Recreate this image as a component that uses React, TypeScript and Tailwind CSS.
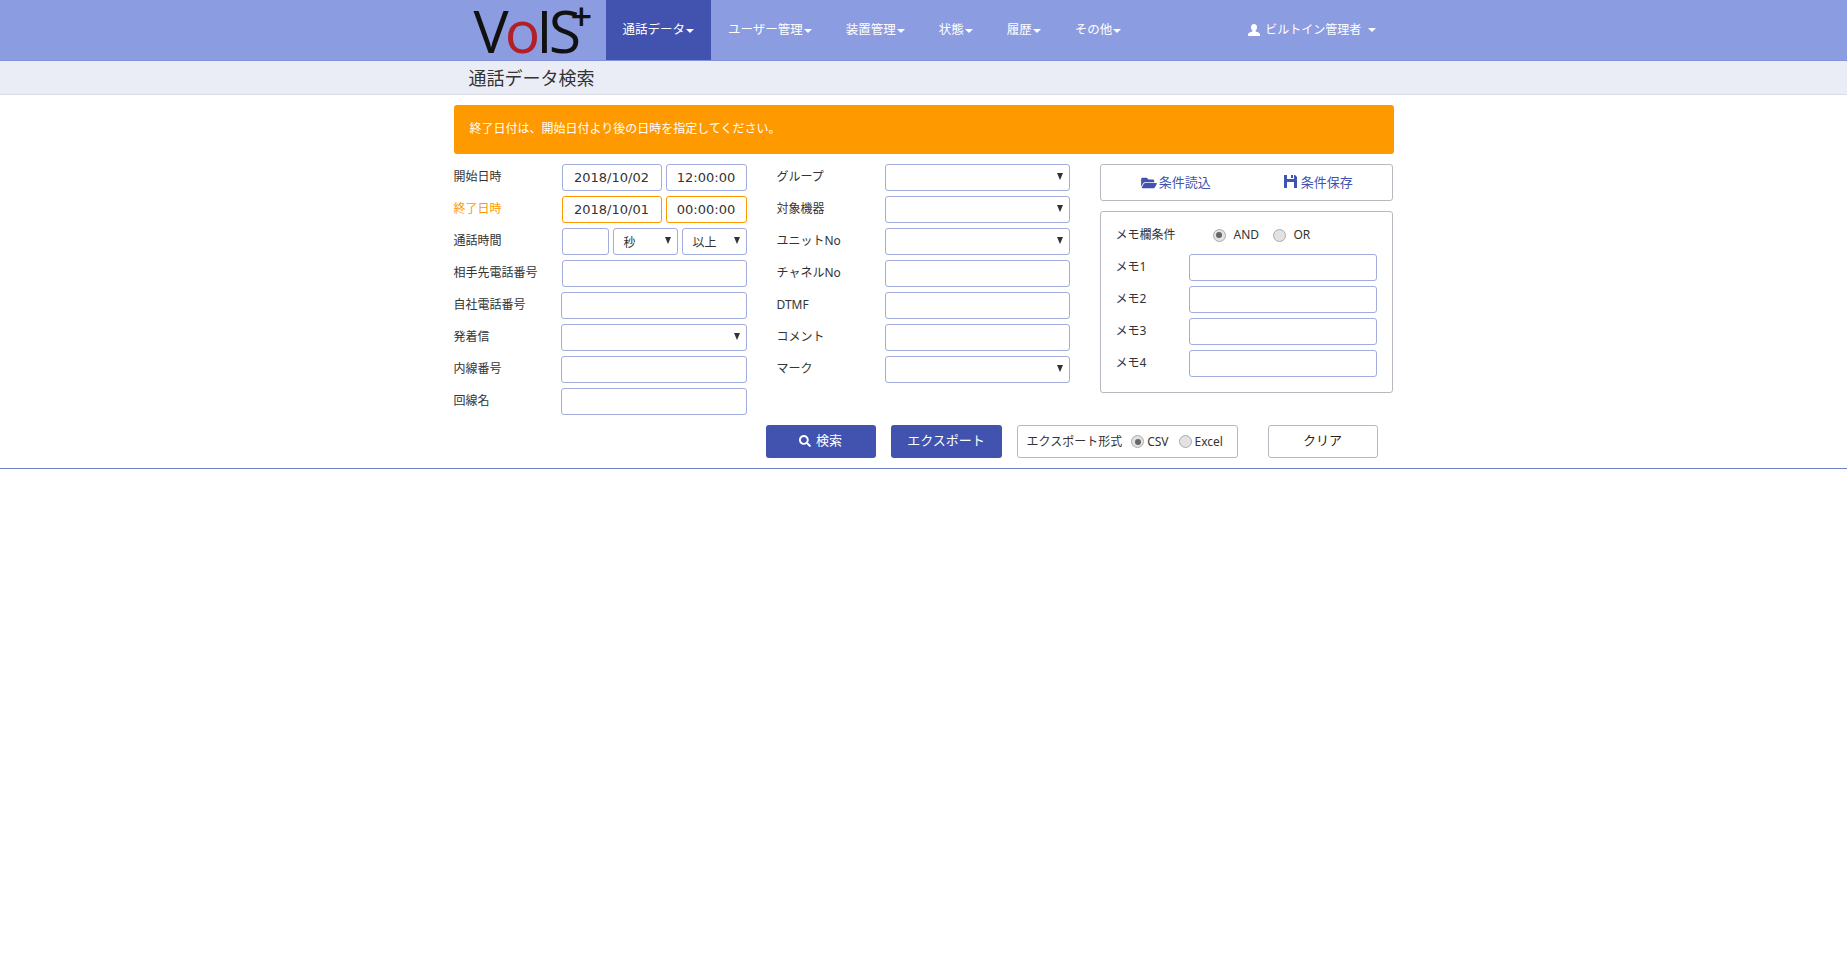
import { ReactNode } from "react";
import { FaFolderOpen, FaSearch } from "react-icons/fa";

const font = "font-['Noto_Sans','Noto_Sans_CJK_JP',sans-serif]";
const navItems = [
  { name: "通話データ", active: true },
  { name: "ユーザー管理" },
  { name: "装置管理" },
  { name: "状態" },
  { name: "履歴" },
  { name: "その他" },
];

function Caret({ className = "ml-px" }: { className?: string }) {
  return (
    <span
      className={`inline-block w-0 h-0 border-x-[4px] border-x-transparent border-t-[4px] border-t-white align-middle ${className}`}
    />
  );
}

function UserIcon() {
  return (
    <svg viewBox="0 0 12 12" className="w-[12px] h-[12px] fill-white">
      <path d="M6 0c2 0 3 1.4 3 3.2 0 1.4-.6 2.6-1.4 3.3v1c2 .6 4.4 1.4 4.4 3V12H0v-1.5c0-1.6 2.4-2.4 4.4-3v-1C3.6 5.8 3 4.6 3 3.2 3 1.4 4 0 6 0z" />
    </svg>
  );
}

function FloppyIcon() {
  return (
    <svg viewBox="0 0 13 13" className="w-[13px] h-[13px] fill-[#4153af] -mt-[2px]">
      <path
        fillRule="evenodd"
        d="M0 0h3v4h7V0h1l2 2v11H0zM3 7v6h7V7zM7 0h2v3H7z"
      />
    </svg>
  );
}

function Row({
  label,
  error,
  labelClass = "w-[108px]",
  children,
}: {
  label: string;
  error?: boolean;
  labelClass?: string;
  children: ReactNode;
}) {
  return (
    <div className="flex items-center h-[27px] mb-[5px]">
      <div
        className={`${labelClass} shrink-0 text-xs -mt-px ${
          error ? "text-[#ff9900]" : "text-[#333]"
        }`}
      >
        {label}
      </div>
      {children}
    </div>
  );
}

function TextBox({
  value,
  className = "w-full",
  error,
}: {
  value?: string;
  className?: string;
  error?: boolean;
}) {
  return (
    <input
      readOnly
      value={value ?? ""}
      className={`h-[27px] shrink-0 rounded-[3px] border bg-white text-center text-[13px] text-[#333] font-['DejaVu_Sans',sans-serif] outline-none ${
        error ? "border-[#ff9900]" : "border-[#a3acdf]"
      } ${className}`}
    />
  );
}

function SelectBox({
  value,
  className = "w-full",
}: {
  value?: string;
  className?: string;
}) {
  return (
    <div
      className={`h-[27px] shrink-0 rounded-[3px] border border-[#a3acdf] bg-white flex items-center justify-between pl-[10px] pr-[6px] text-xs text-[#333] ${className}`}
    >
      <span className="mt-[2px]">{value}</span>
      <span className="w-0 h-0 border-x-[3px] border-x-transparent border-t-[7px] border-t-[#333] -mt-[2px]" />
    </div>
  );
}

function Radio({ checked }: { checked?: boolean }) {
  return (
    <span className="w-[13px] h-[13px] shrink-0 rounded-full border border-[#aaa] bg-[#e2e2e2] flex items-center justify-center">
      {checked && <span className="w-[6px] h-[6px] rounded-full bg-[#666]" />}
    </span>
  );
}

export default function App() {
  return (
    <div className={`min-h-[965px] bg-white ${font}`}>
      <nav className="h-[61px] bg-[#8c9ce0] border-b border-[#8293d8]">
        <div className="w-[940px] mx-auto flex h-[60px] text-[12.5px] text-white">
          <div className="w-[152px] shrink-0 pl-[20px] text-[#111] text-[59px] leading-[60px] font-['Open_Sans',sans-serif] tracking-[-4px] relative">
            V<span className="text-[#b21f27]">o</span>IS
            <span className="absolute left-[117px] top-[-15px] text-[38px] leading-[60px] font-semibold">+</span>
          </div>
          {navItems.map((item) => (
            <div
              key={item.name}
              className={`h-[60px] pt-px px-[17px] flex items-center whitespace-nowrap ${
                item.active ? "bg-[#4153af]" : ""
              }`}
            >
              {item.name}
              <Caret />
            </div>
          ))}
          <div className="ml-[110px] flex items-center gap-[5px] whitespace-nowrap text-xs">
            <UserIcon />
            ビルトイン管理者
            <Caret className="ml-[2px]" />
          </div>
        </div>
      </nav>

      <div className="h-[34px] bg-[#eaedf6] border-b border-[#dcdde6]">
        <div className="w-[940px] mx-auto pl-[15px] text-lg leading-[34px] text-[#333]">
          通話データ検索
        </div>
      </div>

      <div className="border-b border-[#6f7fc8] pb-[10px]">
        <div className="w-[940px] mx-auto pt-[10px]">
          <div className="h-[49px] rounded-[3px] bg-[#ff9900] pl-[16px] text-xs text-white leading-[47px]">
            終了日付は、開始日付より後の日時を指定してください。
          </div>

          <div className="flex mt-[10px]">
            <div className="w-[293px] shrink-0">
              <Row label="開始日時">
                <div className="flex gap-[4px] w-[185px]">
                  <TextBox value="2018/10/02" className="w-[100px]" />
                  <TextBox value="12:00:00" className="w-[81px]" />
                </div>
              </Row>
              <Row label="終了日時" error>
                <div className="flex gap-[4px] w-[185px]">
                  <TextBox value="2018/10/01" className="w-[100px]" error />
                  <TextBox value="00:00:00" className="w-[81px]" error />
                </div>
              </Row>
              <Row label="通話時間">
                <div className="flex gap-[4px] w-[185px]">
                  <TextBox className="w-[47px]" />
                  <SelectBox value="秒" className="w-[65px]" />
                  <SelectBox value="以上" className="w-[65px]" />
                </div>
              </Row>
              <Row label="相手先電話番号">
                <div className="w-[185px]">
                  <TextBox />
                </div>
              </Row>
              {["自社電話番号", "発着信", "内線番号", "回線名"].map((label) => (
                <Row key={label} label={label} labelClass="w-[107px]">
                  <div className="w-[186px]">
                    {label === "発着信" ? <SelectBox /> : <TextBox />}
                  </div>
                </Row>
              ))}
            </div>

            <div className="w-[323px] shrink-0 pl-[30px]">
              {["グループ", "対象機器", "ユニットNo", "チャネルNo", "DTMF", "コメント", "マーク"].map(
                (label) => (
                  <Row key={label} label={label} labelClass="w-[108px]">
                    <div className="w-[185px]">
                      {["グループ", "対象機器", "ユニットNo", "マーク"].includes(label) ? (
                        <SelectBox />
                      ) : (
                        <TextBox />
                      )}
                    </div>
                  </Row>
                )
              )}
            </div>

            <div className="w-[293px] shrink-0 ml-[30px]">
              <div className="h-[37px] rounded-[3px] border border-[#b8b8c0] flex items-center text-[13px] text-[#4153af]">
                <div className="flex-1 flex items-center justify-center gap-[2px] pl-[2px]">
                  <FaFolderOpen className="w-[16px] h-[14px]" />
                  条件読込
                </div>
                <div className="flex-1 flex items-center justify-center gap-[4px] -ml-[4px]">
                  <FloppyIcon />
                  条件保存
                </div>
              </div>
              <div className="mt-[10px] h-[182px] rounded-[3px] border border-[#b8b8c0] px-[15px] pt-[13px] text-xs text-[#333]">
                <div className="flex items-center h-[20px] mb-[9px]">
                  <span className="w-[97px]">メモ欄条件</span>
                  <Radio checked />
                  <span className="ml-[8px] w-[39px]">AND</span>
                  <Radio />
                  <span className="ml-[8px]">OR</span>
                </div>
                {["メモ1", "メモ2", "メモ3", "メモ4"].map((label) => (
                  <Row key={label} label={label} labelClass="w-[73px]">
                    <TextBox className="w-[188px]" />
                  </Row>
                ))}
              </div>
            </div>
          </div>

          <div className="flex items-center h-[33px] mt-[5px] pl-[312px] text-xs">
            <div className="w-[110px] h-[33px] rounded-[3px] bg-[#4153af] text-white text-[13px] flex items-center justify-center gap-[5px] pb-px">
              <FaSearch className="w-[12px] h-[12px]" />
              検索
            </div>
            <div className="ml-[15px] w-[111px] h-[33px] rounded-[3px] bg-[#4153af] text-white text-[13px] flex items-center justify-center pb-px">
              エクスポート
            </div>
            <div className="ml-[15px] w-[221px] h-[33px] rounded-[3px] border border-[#b8b8c0] flex items-center pl-[9px] text-[#333]">
              エクスポート形式
              <span className="ml-[9px] mr-[3px]">
                <Radio checked />
              </span>
              CSV
              <span className="ml-[10px] mr-[3px]">
                <Radio />
              </span>
              Excel
            </div>
            <div className="ml-[30px] w-[110px] h-[33px] rounded-[3px] border border-[#b8b8c0] text-[#222] text-[13px] flex items-center justify-center pb-px">
              クリア
            </div>
          </div>
        </div>
      </div>
    </div>
  );
}
